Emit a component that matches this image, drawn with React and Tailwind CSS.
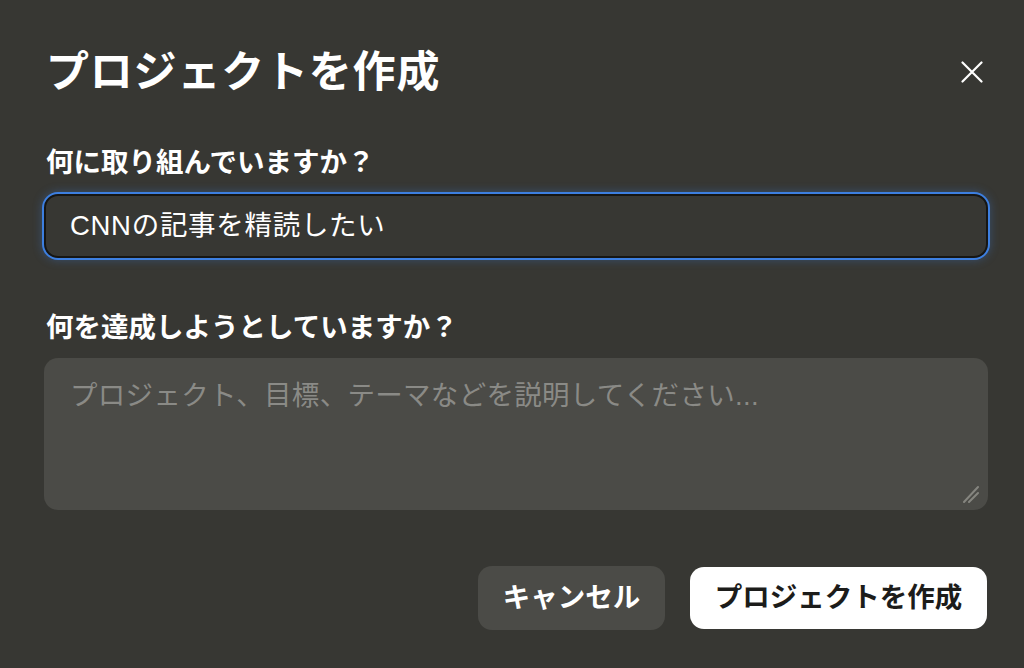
import React from "react";

export default function App() {
  const font = { fontFamily: '"Liberation Sans", "Noto Sans CJK JP", "Noto Sans", sans-serif' };
  return (
    <div
      className="w-[1024px] h-[668px] bg-[#373733] text-white pl-[44px] pr-[36px] pt-[42px] flex flex-col overflow-hidden"
      style={font}
    >
      <div className="h-[60px] flex items-center justify-between">
        <h1 className="text-[43px] font-bold leading-none pl-[2px] tracking-[0.8px]">プロジェクトを作成</h1>
        <button className="w-[24px] h-[24px] mr-[4px] flex items-center justify-center">
          <svg width="22" height="22" viewBox="0 0 22 22" fill="none" stroke="#ffffff" strokeWidth="2.2" strokeLinecap="round">
            <path d="M1.5 1.5 L20.5 20.5 M20.5 1.5 L1.5 20.5" />
          </svg>
        </button>
      </div>

      <label className="mt-[43px] h-[36px] flex items-center text-[27.5px] font-bold leading-none pl-[2px]">
        何に取り組んでいますか？
      </label>
      <div className="mt-[13px] h-[64px] rounded-[14px] border-2 border-[#161614] bg-[#373733] shadow-[0_0_0_2px_#3d7fe0,0_0_10px_2px_rgba(61,127,224,0.35)] flex items-center px-[24px]">
        <span className="text-[27.5px] leading-none tracking-[0.7px]">CNNの記事を精読したい</span>
      </div>

      <label className="mt-[52px] h-[36px] flex items-center text-[27.5px] font-bold leading-none pl-[2px]">
        何を達成しようとしていますか？
      </label>
      <div className="mt-[12px] h-[152px] rounded-[14px] bg-[#4b4b47] relative px-[26px] pt-[20px]">
        <span className="text-[27.5px] leading-[36px] text-[#8a8a86] tracking-[0.3px]">プロジェクト、目標、テーマなどを説明してください...</span>
        <svg className="absolute right-[8px] bottom-[7px]" width="18" height="18" viewBox="0 0 18 18" fill="none" stroke="#85857f" strokeWidth="2" strokeLinecap="round">
          <path d="M2 17 L16 2 M7 17 L16 8" />
        </svg>
      </div>

      <div className="mt-[56px] flex justify-end gap-[25px] pr-[1px]">
        <button className="h-[64px] w-[187px] rounded-[14px] bg-[#4b4b47] text-white text-[27.5px] font-bold leading-none flex items-center justify-center">
          キャンセル
        </button>
        <button className="h-[62px] mt-[1px] w-[297px] rounded-[14px] bg-white text-[#1c1c1a] text-[27.5px] font-bold leading-none flex items-center justify-center">
          プロジェクトを作成
        </button>
      </div>
    </div>
  );
}
